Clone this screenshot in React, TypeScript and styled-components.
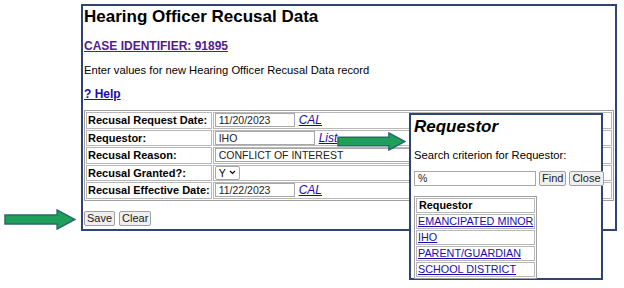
import React from "react";
import styled, { createGlobalStyle } from "styled-components";

const Global = createGlobalStyle`
  html, body { margin: 0; padding: 0; background: #fff; }
  body { font-family: "Liberation Sans", Arial, sans-serif; color: #000; }
`;

const Page = styled.div`
  position: relative;
  width: 624px;
  height: 288px;
  overflow: hidden;
  background: #fff;
`;

const Frame = styled.div`
  box-sizing: border-box;
  margin: 4px 0 0 81px;
  width: 536px;
  height: 227px;
  border: 2px solid #2f4470;
  padding: 1px 0 0 1px;
  display: flex;
  flex-direction: column;
`;

const Title = styled.h1`
  margin: 0;
  font-size: 17px;
  font-weight: bold;
  line-height: 20px;
`;

const CaseLink = styled.a`
  margin-top: 12px;
  font-size: 12px;
  font-weight: bold;
  color: #551a8b;
  text-decoration: underline;
  line-height: 14px;
  align-self: flex-start;
`;

const Intro = styled.p`
  margin: 10px 0 0;
  font-size: 11.2px;
  line-height: 14px;
`;

const Help = styled.a`
  margin-top: 10px;
  font-size: 12px;
  font-weight: bold;
  color: #1a0dab;
  text-decoration: underline;
  line-height: 14px;
  align-self: flex-start;
`;

const Table = styled.table`
  margin-top: 9px;
  border: 1px solid #a0a0a0;
  border-spacing: 1px;
  width: 530px;
  font-size: 11px;
`;

const Label = styled.td`
  border: 1px solid #b8b8b8;
  font-weight: bold;
  padding: 0 1px;
  height: 14.5px;
  line-height: 14px;
  width: 120px;
  white-space: nowrap;
`;

const Value = styled.td`
  border: 1px solid #b8b8b8;
  padding: 0 1px;
  height: 14.5px;
  line-height: 14px;
  white-space: nowrap;
`;

const Field = styled.span<{ $w: number }>`
  display: inline-block;
  flex-shrink: 0;
  box-sizing: border-box;
  width: ${(p) => p.$w}px;
  height: 14px;
  border: 1px solid #a8a8a8;
  padding: 0 3px;
  font-size: 10.5px;
  line-height: 13px;
  vertical-align: top;
  color: #222;
`;

const Select = styled.span`
  display: inline-flex;
  align-items: center;
  gap: 3px;
  box-sizing: border-box;
  height: 14px;
  border: 1px solid #a8a8a8;
  border-radius: 2px;
  padding: 0 3px;
  font-size: 10.5px;
  vertical-align: top;
`;

const SideLink = styled.a`
  margin-left: 4px;
  font-style: italic;
  color: #1a0dab;
  text-decoration: underline;
  font-size: 12px;
  line-height: 14px;
  vertical-align: top;
`;

const Buttons = styled.div`
  display: flex;
  gap: 4px;
  margin-top: 10px;
`;

const Button = styled.span`
  display: inline-block;
  flex-shrink: 0;
  box-sizing: border-box;
  height: 15px;
  padding: 0 2px;
  border: 1px solid #a0a0a0;
  background: #efefef;
  font-size: 11px;
  line-height: 13px;
  border-radius: 2px;
  color: #222;
`;

const Popup = styled.div`
  position: absolute;
  left: 409px;
  top: 113px;
  width: 194px;
  height: 167px;
  box-sizing: border-box;
  border: 2px solid #2f4470;
  background: #fff;
  padding: 2px 0 0 3px;
  display: flex;
  flex-direction: column;
`;

const PopupTitle = styled.h2`
  margin: 0;
  font-size: 17px;
  font-style: italic;
  font-weight: bold;
  line-height: 20px;
`;

const PopupText = styled.p`
  margin: 11px 0 0;
  font-size: 11.2px;
  line-height: 14px;
`;

const SearchRow = styled.div`
  display: flex;
  align-items: center;
  gap: 3px;
  margin-top: 9px;
`;

const SearchField = styled(Field)`
  height: 15px;
`;

const ListTable = styled.table`
  margin-top: 10px;
  border: 1px solid #a0a0a0;
  border-spacing: 1px;
  width: 122px;
  font-size: 10.8px;
`;

const ListHead = styled.th`
  border: 1px solid #b8b8b8;
  text-align: left;
  padding: 0 2px;
  height: 13px;
  line-height: 13px;
`;

const ListCell = styled.td`
  border: 1px solid #b8b8b8;
  padding: 0 1px;
  height: 13px;
  line-height: 13px;
  white-space: nowrap;
`;

const ListLink = styled.a`
  color: #1a0dab;
  text-decoration: underline;
`;

const Arrow = styled.svg<{ $x: number; $y: number }>`
  position: absolute;
  left: ${(p) => p.$x}px;
  top: ${(p) => p.$y}px;
`;

function GreenArrow({ x, y, w, h }: { x: number; y: number; w: number; h: number }) {
  const head = h * 0.9;
  const bodyTop = h * 0.28;
  const bodyBot = h * 0.72;
  return (
    <Arrow $x={x} $y={y} width={w} height={h} viewBox={`0 0 ${w} ${h}`}>
      <polygon
        points={`1,${bodyTop} ${w - head},${bodyTop} ${w - head},1 ${w - 1},${h / 2} ${w - head},${h - 1} ${w - head},${bodyBot} 1,${bodyBot}`}
        fill="#1fa05a"
        stroke="#2a6a6c"
        strokeWidth="1.5"
        strokeLinejoin="miter"
      />
    </Arrow>
  );
}

export default function App() {
  return (
    <Page>
      <Global />
      <Frame>
        <Title>Hearing Officer Recusal Data</Title>
        <CaseLink>CASE IDENTIFIER: 91895</CaseLink>
        <Intro>Enter values for new Hearing Officer Recusal Data record</Intro>
        <Help>? Help</Help>
        <Table>
          <tbody>
            <tr>
              <Label>Recusal Request Date:</Label>
              <Value>
                <Field $w={80}>11/20/2023</Field>
                <SideLink>CAL</SideLink>
              </Value>
            </tr>
            <tr>
              <Label>Requestor:</Label>
              <Value>
                <Field $w={100}>IHO</Field>
                <SideLink>List</SideLink>
              </Value>
            </tr>
            <tr>
              <Label>Recusal Reason:</Label>
              <Value>
                <Field $w={300}>CONFLICT OF INTEREST</Field>
              </Value>
            </tr>
            <tr>
              <Label>Recusal Granted?:</Label>
              <Value>
                <Select>
                  Y
                  <svg width="7" height="5" viewBox="0 0 7 5">
                    <path d="M1 1 L3.5 3.5 L6 1" fill="none" stroke="#000" strokeWidth="1.2" />
                  </svg>
                </Select>
              </Value>
            </tr>
            <tr>
              <Label>Recusal Effective Date:</Label>
              <Value>
                <Field $w={80}>11/22/2023</Field>
                <SideLink>CAL</SideLink>
              </Value>
            </tr>
          </tbody>
        </Table>
        <Buttons>
          <Button>Save</Button>
          <Button>Clear</Button>
        </Buttons>
      </Frame>
      <GreenArrow x={337} y={132} w={69} h={19} />
      <GreenArrow x={4} y={209} w={72} h={21} />
      <Popup>
        <PopupTitle>Requestor</PopupTitle>
        <PopupText>Search criterion for Requestor:</PopupText>
        <SearchRow>
          <SearchField $w={122}>%</SearchField>
          <Button>Find</Button>
          <Button>Close</Button>
        </SearchRow>
        <ListTable>
          <tbody>
            <tr>
              <ListHead>Requestor</ListHead>
            </tr>
            {["EMANCIPATED MINOR", "IHO", "PARENT/GUARDIAN", "SCHOOL DISTRICT"].map((t) => (
              <tr key={t}>
                <ListCell>
                  <ListLink>{t}</ListLink>
                </ListCell>
              </tr>
            ))}
          </tbody>
        </ListTable>
      </Popup>
    </Page>
  );
}
